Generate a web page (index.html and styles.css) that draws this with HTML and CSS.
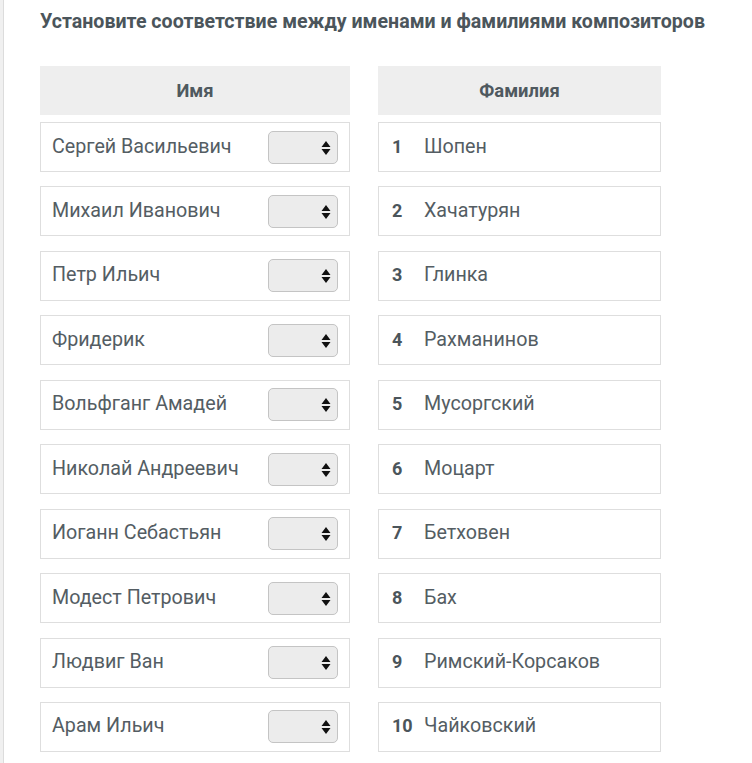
FILE: index.html
```html
<!DOCTYPE html>
<html lang="ru">
<head>
  <meta charset="UTF-8" />
  <title>Композиторы</title>
  <link rel="stylesheet" href="styles.css">
</head>
<body>
  <div class="page">
    <h2 class="task-title">Установите соответствие между именами и фамилиями композиторов</h2>

    <div class="match">
      <div class="col col-left">
        <div class="col-head">Имя</div>
        <div class="row"><span>Сергей Васильевич</span><span class="pick"><select></select><svg viewBox="0 0 10 16"><path d="M5 1 L9.5 7 H0.5 Z M5 15 L9.5 9 H0.5 Z"/></svg></span></div>
        <div class="row"><span>Михаил Иванович</span><span class="pick"><select></select><svg viewBox="0 0 10 16"><path d="M5 1 L9.5 7 H0.5 Z M5 15 L9.5 9 H0.5 Z"/></svg></span></div>
        <div class="row"><span>Петр Ильич</span><span class="pick"><select></select><svg viewBox="0 0 10 16"><path d="M5 1 L9.5 7 H0.5 Z M5 15 L9.5 9 H0.5 Z"/></svg></span></div>
        <div class="row"><span>Фридерик</span><span class="pick"><select></select><svg viewBox="0 0 10 16"><path d="M5 1 L9.5 7 H0.5 Z M5 15 L9.5 9 H0.5 Z"/></svg></span></div>
        <div class="row"><span>Вольфганг Амадей</span><span class="pick"><select></select><svg viewBox="0 0 10 16"><path d="M5 1 L9.5 7 H0.5 Z M5 15 L9.5 9 H0.5 Z"/></svg></span></div>
        <div class="row"><span>Николай Андреевич</span><span class="pick"><select></select><svg viewBox="0 0 10 16"><path d="M5 1 L9.5 7 H0.5 Z M5 15 L9.5 9 H0.5 Z"/></svg></span></div>
        <div class="row"><span>Иоганн Себастьян</span><span class="pick"><select></select><svg viewBox="0 0 10 16"><path d="M5 1 L9.5 7 H0.5 Z M5 15 L9.5 9 H0.5 Z"/></svg></span></div>
        <div class="row"><span>Модест Петрович</span><span class="pick"><select></select><svg viewBox="0 0 10 16"><path d="M5 1 L9.5 7 H0.5 Z M5 15 L9.5 9 H0.5 Z"/></svg></span></div>
        <div class="row"><span>Людвиг Ван</span><span class="pick"><select></select><svg viewBox="0 0 10 16"><path d="M5 1 L9.5 7 H0.5 Z M5 15 L9.5 9 H0.5 Z"/></svg></span></div>
        <div class="row"><span>Арам Ильич</span><span class="pick"><select></select><svg viewBox="0 0 10 16"><path d="M5 1 L9.5 7 H0.5 Z M5 15 L9.5 9 H0.5 Z"/></svg></span></div>
      </div>

      <div class="col col-right">
        <div class="col-head">Фамилия</div>
        <div class="row"><b class="num">1</b><span>Шопен</span></div>
        <div class="row"><b class="num">2</b><span>Хачатурян</span></div>
        <div class="row"><b class="num">3</b><span>Глинка</span></div>
        <div class="row"><b class="num">4</b><span>Рахманинов</span></div>
        <div class="row"><b class="num">5</b><span>Мусоргский</span></div>
        <div class="row"><b class="num">6</b><span>Моцарт</span></div>
        <div class="row"><b class="num">7</b><span>Бетховен</span></div>
        <div class="row"><b class="num">8</b><span>Бах</span></div>
        <div class="row"><b class="num">9</b><span>Римский-Корсаков</span></div>
        <div class="row"><b class="num">10</b><span>Чайковский</span></div>
      </div>
    </div>
  </div>
</body>
</html>
```

FILE: styles.css
```css
body {
  margin: 0;
  font-family: Roboto, "Liberation Sans", sans-serif;
  color: #545d63;
  background: #fff;
}
.page {
  min-height: 763px;
  box-sizing: border-box;
  border-left: 3px solid #f0f0f0;
  box-shadow: inset 1px 0 0 #dcdcdc;
  padding: 11px 0 0 37px;
}
.task-title {
  margin: 0;
  font-size: 19.6px;
  line-height: 22px;
  font-weight: 700;
  color: #4b555b;
}
.match {
  display: grid;
  grid-template-columns: 310px 283px;
  column-gap: 28px;
  margin-top: 33px;
}
.col-head {
  height: 49px;
  background: #eeeeee;
  display: flex;
  align-items: center;
  justify-content: center;
  font-weight: 700;
  font-size: 18.4px;
  margin-bottom: 7px;
  color: #4f595f;
}
.row {
  height: 50px;
  box-sizing: border-box;
  border: 1px solid #dedede;
  display: flex;
  align-items: center;
  font-size: 19.7px;
  margin-bottom: 14.45px;
  padding-bottom: 2px;
}
.col-left .row {
  justify-content: space-between;
  padding-left: 11px;
  padding-right: 11px;
}
.col-right .row {
  padding-left: 13px;
}
.num {
  width: 32px;
  font-weight: 700;
  font-size: 18px;
  color: #4b555b;
}
.pick {
  position: relative;
  display: block;
  width: 70px;
  height: 33px;
  margin-top: 2px;
}
.pick select {
  appearance: none;
  -webkit-appearance: none;
  width: 70px;
  height: 33px;
  margin: 0;
  border: 1px solid #c4c4c4;
  border-radius: 5px;
  background: #ececec;
}
.pick svg {
  position: absolute;
  right: 7px;
  top: 9px;
  width: 10px;
  height: 16px;
  fill: #111;
}
```
